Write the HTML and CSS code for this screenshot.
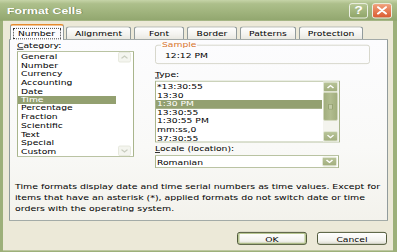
FILE: index.html
```html
<!DOCTYPE html>
<html>
<head>
<meta charset="utf-8">
<title>Format Cells</title>
<link rel="stylesheet" href="styles.css">
</head>
<body>
<div class="frame">
<div class="window">
  <div class="titlebar">
    <span class="title">Format Cells</span>
    <div class="caption-buttons">
      <span class="cap-btn help">?</span>
      <span class="cap-btn close"><svg width="12" height="12" viewBox="0 0 12 12"><path d="M2 2 L10 10 M10 2 L2 10" stroke="#fff" stroke-width="2.2" stroke-linecap="round"/></svg></span>
    </div>
  </div>
  <div class="client">
    <div class="tabs">
      <div class="tab active"><span class="focus">Number</span></div>
      <div class="tab">Alignment</div>
      <div class="tab">Font</div>
      <div class="tab">Border</div>
      <div class="tab">Patterns</div>
      <div class="tab">Protection</div>
    </div>
    <div class="panel">
      <div class="cols">
        <div class="col">
          <div class="label label-cat"><u>C</u>ategory:</div>
          <div class="listbox list-cat">
            <ul class="items">
              <li>General</li>
              <li>Number</li>
              <li>Currency</li>
              <li>Accounting</li>
              <li>Date</li>
              <li class="selected">Time</li>
              <li>Percentage</li>
              <li>Fraction</li>
              <li>Scientific</li>
              <li>Text</li>
              <li>Special</li>
              <li>Custom</li>
            </ul>
            <div class="scrollbar disabled">
              <span class="sb-btn"><svg width="9" height="7" viewBox="0 0 9 7"><path d="M1.5 5 L4.5 2 L7.5 5" fill="none" stroke="#c9cdbf" stroke-width="1.4"/></svg></span>
              <span class="sb-track"></span>
              <span class="sb-btn"><svg width="9" height="7" viewBox="0 0 9 7"><path d="M1.5 2 L4.5 5 L7.5 2" fill="none" stroke="#c9cdbf" stroke-width="1.4"/></svg></span>
            </div>
          </div>
        </div>
        <div class="col">
          <fieldset class="sample">
            <legend>Sample</legend>
            <div class="sample-value">12:12 PM</div>
          </fieldset>
          <div class="label label-type"><u>T</u>ype:</div>
          <div class="listbox list-type">
            <ul class="items">
              <li>*13:30:55</li>
              <li>13:30</li>
              <li class="selected">1:30 PM</li>
              <li>13:30:55</li>
              <li>1:30:55 PM</li>
              <li>mm:ss,0</li>
              <li>37:30:55</li>
            </ul>
            <div class="scrollbar">
              <span class="sb-btn"><svg width="9" height="7" viewBox="0 0 9 7"><path d="M1.5 5 L4.5 2 L7.5 5" fill="none" stroke="#fff" stroke-width="1.5"/></svg></span>
              <span class="sb-thumb"><span class="grip"></span></span>
              <span class="sb-track"></span>
              <span class="sb-btn"><svg width="9" height="7" viewBox="0 0 9 7"><path d="M1.5 2 L4.5 5 L7.5 2" fill="none" stroke="#fff" stroke-width="1.5"/></svg></span>
            </div>
          </div>
          <div class="label label-locale"><u>L</u>ocale (location):</div>
          <div class="combo">
            <span class="combo-value">Romanian</span>
            <span class="sb-btn combo-btn"><svg width="9" height="7" viewBox="0 0 9 7"><path d="M1.5 2 L4.5 5 L7.5 2" fill="none" stroke="#fff" stroke-width="1.5"/></svg></span>
          </div>
        </div>
      </div>
      <p class="desc">Time formats display date and time serial numbers as time values. Except for<br>items that have an asterisk (*), applied formats do not switch date or time<br>orders with the operating system.</p>
    </div>
    <div class="buttons">
      <button class="btn btn-default">OK</button>
      <button class="btn">Cancel</button>
    </div>
  </div>
</div>
</div>
</body>
</html>
```

FILE: styles.css
```css
* { box-sizing: border-box; }
html, body { margin: 0; padding: 0; overflow: hidden; background: #ECE9D8; }
body { width: 397px; height: 252px; }

.frame {
  width: 397px;
  height: 252px;
  overflow: hidden;
}

.window {
  width: 397px;
  height: 315px;
  margin-bottom: -63px;
  transform: scaleY(0.8);
  transform-origin: 0 0;
  display: flex;
  flex-direction: column;
  background: #9db07a;
  font-family: "DejaVu Sans", Verdana, sans-serif;
  font-size: 9.2px;
  color: #000;
}

.titlebar {
  height: 26px;
  flex: none;
  display: flex;
  align-items: center;
  padding: 0 5px 0 7px;
  background: linear-gradient(#c6d4a8 0, #adbf8b 18%, #9fb37c 60%, #91a66e 100%);
}
.title {
  flex: 1;
  font-family: "Liberation Sans", Arial, sans-serif;
  font-weight: bold;
  font-size: 12.4px;
  color: #fff;
  text-shadow: 1px 1px 0 #728552;
}
.caption-buttons { display: flex; gap: 4px; align-items: center; }
.cap-btn {
  width: 19px;
  height: 19px;
  border: 1px solid #f4f6ee;
  border-radius: 3px;
  display: flex;
  align-items: center;
  justify-content: center;
}
.help {
  background: linear-gradient(#b6c793, #8fa568);
  color: #fff;
  font-family: "Liberation Sans", Arial, sans-serif;
  font-weight: bold;
  font-size: 14px;
}
.close {
  width: 20px;
  background: linear-gradient(#f0a27c, #db5a30);
}

.client {
  flex: 1;
  margin: 0 4px 2px 3px;
  background: #ECE9D8;
  display: flex;
  flex-direction: column;
}

.tabs {
  height: 22.75px;
  display: flex;
  align-items: flex-end;
  padding-left: 7px;
  flex: none;
}
.tab {
  height: 16.25px;
  min-width: 50px;
  padding: 0 8px;
  margin-left: 3px;
  display: flex;
  align-items: center;
  justify-content: center;
  border: 1px solid #919b9c;
  border-bottom: none;
  border-radius: 3px 3px 0 0;
  background: linear-gradient(#ffffff, #f3f3ef 60%, #e9e8e0);
  white-space: nowrap;
}
.tab.active {
  position: relative;
  z-index: 1;
  height: 19.75px;
  margin: 0 -1px -1px 0;
  padding: 2px 3px 0;
  border-top: 2.5px solid #e68b2c;
  background: #fcfcfe;
}
.focus {
  outline: 1px dotted #333;
  padding: 0 5px 0 4px;
  line-height: 12px;
}

.panel {
  height: 227.5px;
  margin: 0 5px 0 6px;
  padding: 1.25px 0 0 7px;
  border: 1px solid #919b9c;
  background: linear-gradient(#fcfcfe 0, #f9f9f7 60%, #f3f2ec 100%);
}
.cols {
  display: grid;
  grid-template-columns: 117px 215px;
  column-gap: 21px;
  align-items: start;
}

.label { line-height: 12px; height: 12px; white-space: nowrap; }
.label-cat { line-height: 12.75px; height: 12.75px; }
.label-type { margin-top: 6.5px; }
.label-locale { margin-top: 2.75px; }

.listbox {
  display: flex;
  border: 1px solid #a9b58c;
  background: #fff;
}
.list-cat { height: 132.5px; }
.list-type { height: 76.25px; width: 185px; margin-top: 2.75px; }

.items {
  flex: 1;
  list-style: none;
  margin: 0;
  padding: 1px 1px 0 0;
  overflow: hidden;
}
.items li {
  height: 10.75px;
  line-height: 10.75px;
  padding-left: 3px;
  white-space: nowrap;
}
.list-type .items li { padding-left: 1px; }
.items li.selected { background: #93a070; color: #fff; }

.scrollbar {
  width: 16px;
  display: flex;
  flex-direction: column;
  padding: 0 1px 0 0;
  background: #f4f4ee;
}
.scrollbar.disabled { background: #fff; padding: 0 2px 0 1px; }
.sb-btn {
  height: 13px;
  flex: none;
  display: flex;
  align-items: center;
  justify-content: center;
  border: 1px solid #dfe4d0;
  border-radius: 2px;
  background: linear-gradient(#b8c498, #a2ae7e);
}
.scrollbar.disabled .sb-btn {
  border-color: #e4e7da;
  background: #f4f5ef;
}
.sb-thumb {
  height: 36px;
  flex: none;
  display: flex;
  align-items: center;
  justify-content: center;
  border: 1px solid #cdd4b6;
  border-radius: 2px;
  background: linear-gradient(90deg, #a2ae7e, #b1bc8f 50%, #a2ae7e);
}
.grip { width: 5px; height: 7px; background: #c3cba8; border: 1px solid #97a373; }
.sb-track { flex: 1; }

.sample {
  margin: 0;
  padding: 3px 0 3px 9px;
  border: 1px solid #d3d3c6;
  border-radius: 3px;
  min-inline-size: 0;
}
.sample legend {
  margin-left: -4px;
  padding: 0 1px;
  line-height: 10px;
  color: #d8742a;
}
.sample-value { line-height: 12px; height: 12px; }

.combo {
  width: 184px;
  height: 16.25px;
  margin-top: 1.5px;
  display: flex;
  align-items: stretch;
  border: 1px solid #a9b58c;
  background: #fff;
  padding: 1px 1px 1px 0;
}
.combo-value { flex: 1; padding-left: 1px; line-height: 13px; }
.combo-btn { width: 15px; height: auto; }

.desc {
  margin: 16.45px 0 0 -2px;
  line-height: 13.9px;
  font-size: 9.4px;
  white-space: nowrap;
}

.buttons {
  display: flex;
  justify-content: flex-end;
  gap: 10px;
  margin-top: 13.75px;
  padding-right: 6px;
}
.btn {
  width: 70px;
  height: 16.25px;
  padding: 0;
  font-family: "DejaVu Sans", Verdana, sans-serif;
  font-size: 9.2px;
  color: #000;
  border: 1px solid #3f4a2a;
  border-radius: 3px;
  background: linear-gradient(#ffffff, #f3f3ee 70%, #dcdcd0);
}
.btn-default {
  box-shadow: inset 0 0 0 1.5px #b7c691;
}
```
